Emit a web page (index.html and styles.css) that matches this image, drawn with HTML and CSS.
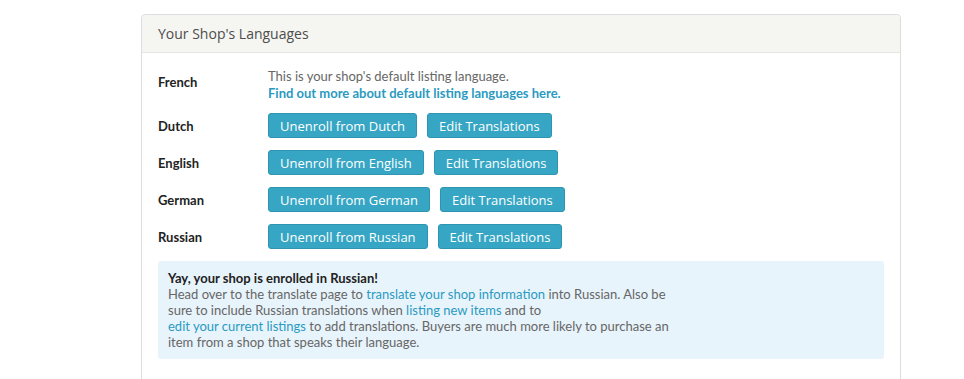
FILE: index.html
```html
<!DOCTYPE html>
<html lang="en">
<head>
    <meta charset="UTF-8">
    <meta name="viewport" content="width=device-width, initial-scale=1.0">
    <title>Your Shop's Languages</title>
    <link rel="stylesheet" href="styles.css">
</head>
<body>
    <div class="panel">
        <div class="panel-header">Your Shop's Languages</div>
        <div class="panel-body">
            <div class="lang-row default-row">
                <div class="lang-name">French</div>
                <div class="lang-info">
                    <div>This is your shop's default listing language.</div>
                    <a href="#" class="link-strong">Find out more about default listing languages here.</a>
                </div>
            </div>

            <div class="lang-row">
                <div class="lang-name">Dutch</div>
                <div class="lang-actions">
                    <button class="btn">Unenroll from Dutch</button>
                    <button class="btn">Edit Translations</button>
                </div>
            </div>

            <div class="lang-row">
                <div class="lang-name">English</div>
                <div class="lang-actions">
                    <button class="btn">Unenroll from English</button>
                    <button class="btn">Edit Translations</button>
                </div>
            </div>

            <div class="lang-row">
                <div class="lang-name">German</div>
                <div class="lang-actions">
                    <button class="btn">Unenroll from German</button>
                    <button class="btn">Edit Translations</button>
                </div>
            </div>

            <div class="lang-row">
                <div class="lang-name">Russian</div>
                <div class="lang-actions">
                    <button class="btn">Unenroll from Russian</button>
                    <button class="btn">Edit Translations</button>
                </div>
            </div>

            <div class="notice">
                <div class="notice-title">Yay, your shop is enrolled in Russian!</div>
                Head over to the translate page to <a href="#">translate your shop information</a> into Russian. Also be<br>
                sure to include Russian translations when <a href="#">listing new items</a> and to<br>
                <a href="#">edit your current listings</a> to add translations. Buyers are much more likely to purchase an<br>
                item from a shop that speaks their language.
            </div>
        </div>
    </div>
</body>
</html>
```

FILE: styles.css
```css
body {
    margin: 0;
    font-family: Lato, "Open Sans", sans-serif;
    font-size: 13px;
    color: #666;
    background-color: #fff;
}
a {
    color: #2a9ac1;
    text-decoration: none;
}
.panel {
    margin: 14px 0 0 141px;
    width: 758px;
    height: 400px;
    border: 1px solid #ddd;
    border-radius: 4px;
}
.panel-header {
    height: 37px;
    line-height: 37px;
    padding-left: 16px;
    background-color: #f5f5f1;
    border-bottom: 1px solid #e6e6e2;
    border-radius: 4px 4px 0 0;
    font-family: "Open Sans", sans-serif;
    font-size: 14px;
    color: #4d4d4d;
}
.panel-body {
    padding: 15px 16px 0 16px;
}
.lang-row {
    display: flex;
    align-items: center;
    margin-bottom: 12px;
}
.default-row {
    align-items: flex-start;
    margin-bottom: 11px;
}
.default-row .lang-name {
    padding-top: 6px;
}
.lang-name {
    width: 110px;
    flex-shrink: 0;
    color: #222;
    font-size: 13px;
    font-weight: bold;
}
.lang-info {
    line-height: 17px;
}
.link-strong {
    font-weight: bold;
}
.lang-actions {
    display: flex;
    gap: 10px;
}
.btn {
    height: 25px;
    padding: 0 11px;
    font-family: "Open Sans", sans-serif;
    font-size: 13px;
    color: #fff;
    background-color: #36a6c4;
    border: 1px solid #2e95b1;
    border-radius: 3px;
    cursor: pointer;
}
.notice {
    margin-top: 12px;
    padding: 9px 10px;
    width: 706px;
    line-height: 16px;
    background-color: #e8f4fb;
    border-radius: 3px;
}
.notice-title {
    color: #222;
    font-weight: bold;
}
```
